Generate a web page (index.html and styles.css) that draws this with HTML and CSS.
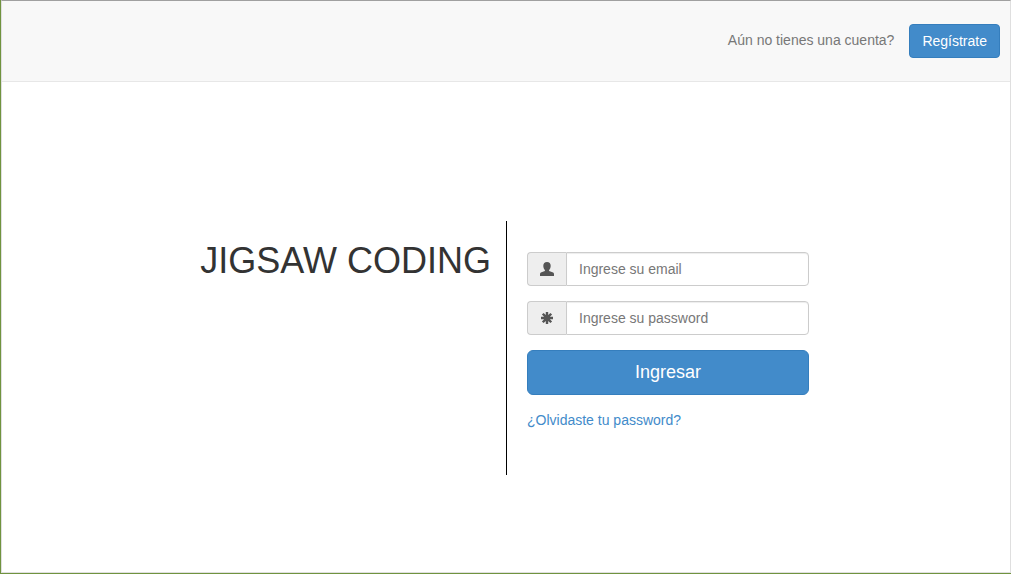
FILE: index.html
```html
<!DOCTYPE html>
<html lang="es">
<head>
<meta charset="utf-8">
<meta name="viewport" content="width=device-width, initial-scale=1">
<title>Jigsaw Coding</title>
<link rel="stylesheet" href="styles.css">
</head>
<body>
<div class="page">
  <header class="navbar">
    <p class="navbar-text">Aún no tienes una cuenta?</p>
    <button type="button" class="btn">Regístrate</button>
  </header>
  <main class="login">
    <div class="brand">
      <h1 class="brand-title">JIGSAW CODING</h1>
    </div>
    <div class="panel">
      <form class="form">
        <div class="input-group">
          <label class="addon" for="email" aria-label="Email">
            <svg class="icon" viewBox="0 0 14 14" aria-hidden="true"><path d="M7 0C4.600 0 3.300 1.500 3.300 3.700C3.300 5.600 4 7 4.900 7.900V9L1.500 10.300C.5 10.700 0 11.400 0 12.300V14H14V12.300C14 11.400 13.500 10.700 12.500 10.300L9.100 9V7.900C10 7 10.700 5.600 10.700 3.700C10.700 1.500 9.400 0 7 0Z"/></svg>
          </label>
          <input class="control" type="email" id="email" placeholder="Ingrese su email">
        </div>
        <div class="input-group">
          <label class="addon" for="password" aria-label="Password">
            <svg class="icon" viewBox="0 0 14 14" aria-hidden="true"><path d="M5.800 1H8.200V4.100L10.400 1.900L12.100 3.600L9.900 5.800H13V8.200H9.900L12.100 10.400L10.400 12.100L8.200 9.900V13H5.800V9.900L3.600 12.100L1.900 10.400L4.100 8.200H1V5.800H4.100L1.900 3.600L3.600 1.900L5.800 4.100Z"/></svg>
          </label>
          <input class="control" type="password" id="password" placeholder="Ingrese su password">
        </div>
        <button type="submit" class="btn btn-large">Ingresar</button>
        <a class="link" href="#">¿Olvidaste tu password?</a>
      </form>
    </div>
  </main>
</div>
</body>
</html>
```
FILE: styles.css
```css
* {
  box-sizing: border-box;
}

body {
  margin: 0;
  border: solid #70933f;
  border-width: 0 0 1px 1px;
  background: #fff;
  color: #333;
  font-family: "Liberation Sans", Arial, sans-serif;
  font-size: 14px;
  line-height: 20px;
}

.page {
  min-height: calc(100vh - 1px);
  border: 1px solid #dfdfdf;
  border-top-color: #a0a0a0;
}

.navbar {
  display: flex;
  align-items: center;
  justify-content: flex-end;
  gap: 15px;
  padding: 23px 10px;
  border-bottom: 1px solid #e7e7e7;
  background: #f8f8f8;
}

.navbar-text {
  margin: 0;
  padding-bottom: 2px;
  color: #777;
}

.btn {
  padding: 6px 12px;
  border: 1px solid #357ebd;
  border-radius: 4px;
  background: #428bca;
  color: #fff;
  font: inherit;
  cursor: pointer;
}

.btn-large {
  padding: 10px 16px;
  border-radius: 6px;
  font-size: 18px;
  line-height: 23px;
}

.login {
  display: grid;
  grid-template-columns: 1fr 1fr;
  margin-top: 139px;
}

.brand {
  padding: 20px 15px;
  text-align: right;
}

.brand-title {
  margin: 0;
  font-size: 36px;
  font-weight: 500;
  line-height: 40px;
}

.panel {
  padding: 31px 20px 45px;
  border-left: 1px solid #000;
}

.form {
  display: flex;
  flex-direction: column;
  gap: 15px;
  max-width: 282px;
}

.input-group {
  display: flex;
  height: 34px;
}

.addon {
  display: flex;
  align-items: center;
  justify-content: center;
  width: 39px;
  border: 1px solid #ccc;
  border-right: 0;
  border-radius: 4px 0 0 4px;
  background: #eee;
}

.icon {
  width: 14px;
  height: 14px;
  fill: #555;
}

.control {
  flex: 1;
  min-width: 0;
  padding: 6px 12px;
  border: 1px solid #ccc;
  border-radius: 0 4px 4px 0;
  background: #fff;
  box-shadow: inset 0 1px 1px rgba(0, 0, 0, 0.075);
  color: #555;
  font: inherit;
}

.control::placeholder {
  color: #777;
}

.link {
  align-self: flex-start;
  color: #428bca;
  text-decoration: none;
}
```
